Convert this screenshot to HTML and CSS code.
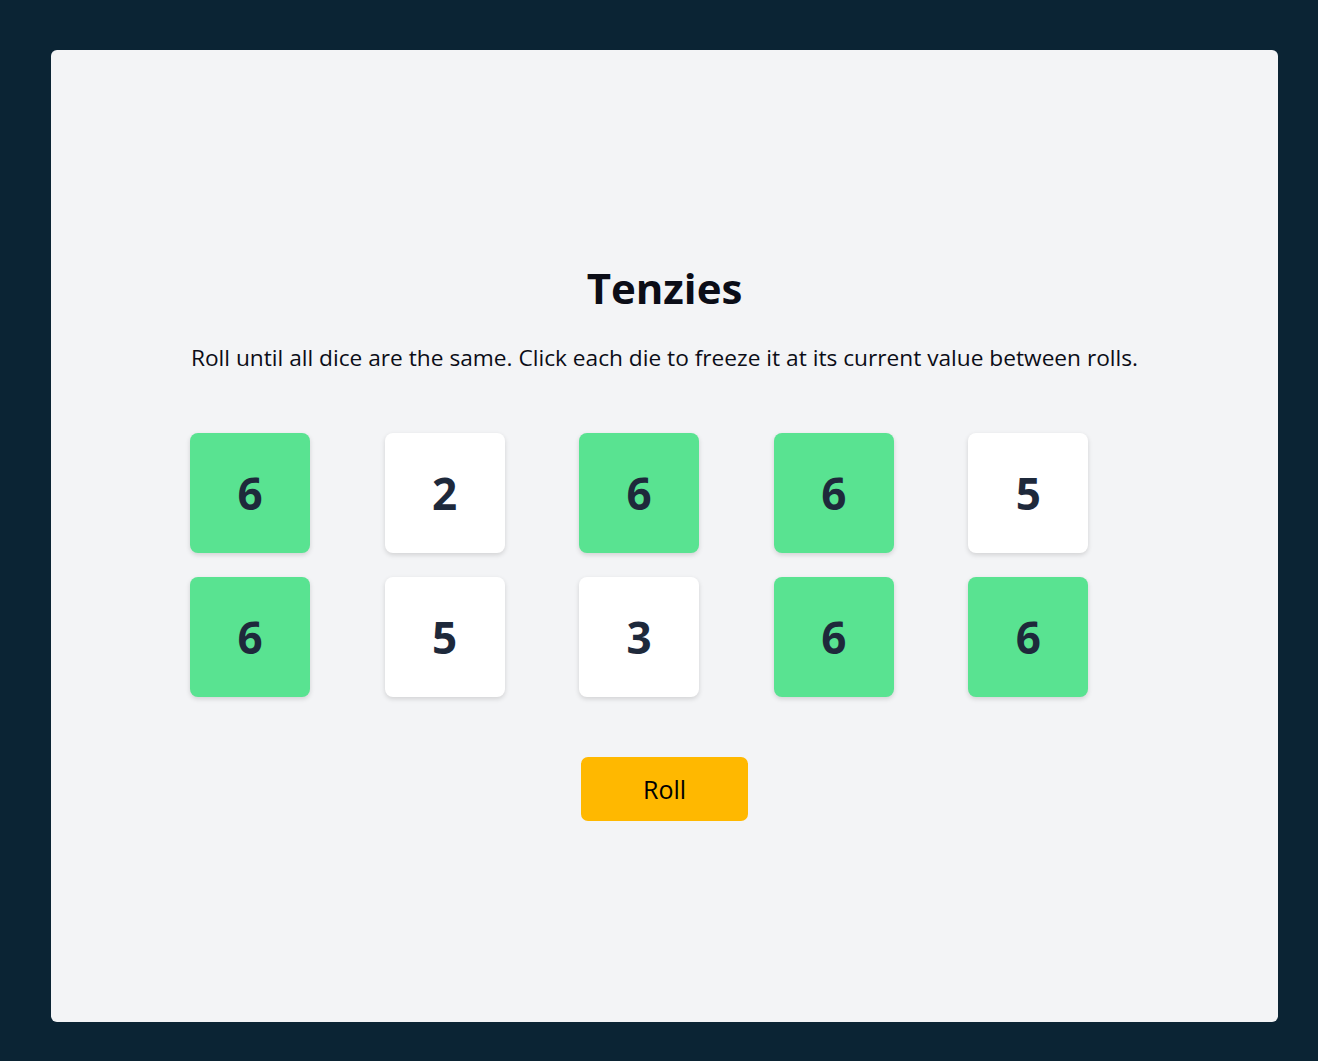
FILE: index.html
```html
<!DOCTYPE html>
<html lang="en">
<head>
<meta charset="utf-8">
<title>Tenzies</title>
<link rel="stylesheet" href="styles.css">
</head>
<body>
<main class="board">
  <h1 class="title">Tenzies</h1>
  <p class="instructions">Roll until all dice are the same. Click each die to freeze it at its current value between rolls.</p>
  <div class="dice">
    <button class="die held">6</button>
    <button class="die">2</button>
    <button class="die held">6</button>
    <button class="die held">6</button>
    <button class="die">5</button>
    <button class="die held">6</button>
    <button class="die">5</button>
    <button class="die">3</button>
    <button class="die held">6</button>
    <button class="die held">6</button>
  </div>
  <button class="roll">Roll</button>
</main>
</body>
</html>
```
FILE: styles.css
```css
* { box-sizing: border-box; }
html, body { margin: 0; }
body {
  background: #0b2434;
  height: 1061px;
  padding: 50px 40px 39px 51px;
  font-family: "Open Sans", "Noto Sans", sans-serif;
}
.board {
  background: #f3f4f6;
  border-radius: 6px;
  height: 100%;
  display: flex;
  flex-direction: column;
  align-items: center;
  justify-content: center;
  padding-top: 12px;
}
.title {
  margin: 0;
  font-size: 42px;
  font-weight: 700;
  color: #0b0d17;
  line-height: 1.2;
}
.instructions {
  margin: 30px 0 0;
  font-size: 22.7px;
  color: #0b0d17;
  line-height: 1.3;
  text-align: center;
  white-space: nowrap;
}
.dice {
  margin-top: 61px;
  width: 949px;
  display: grid;
  grid-template-columns: repeat(5, 1fr);
  gap: 24px;
}
.die {
  width: 120px;
  height: 120px;
  border: none;
  border-radius: 8px;
  background: #ffffff;
  box-shadow: 0 2px 5px rgba(0, 0, 0, 0.14);
  font-family: inherit;
  font-size: 44px;
  font-weight: 700;
  color: #1e293b;
  display: flex;
  align-items: center;
  justify-content: center;
  padding: 0;
}
.die.held { background: #59e391; }
.roll {
  margin-top: 60px;
  width: 167px;
  height: 64px;
  border: none;
  border-radius: 7px;
  background: #ffb800;
  font-family: inherit;
  font-size: 25px;
  color: #000;
  padding: 0;
}
```
